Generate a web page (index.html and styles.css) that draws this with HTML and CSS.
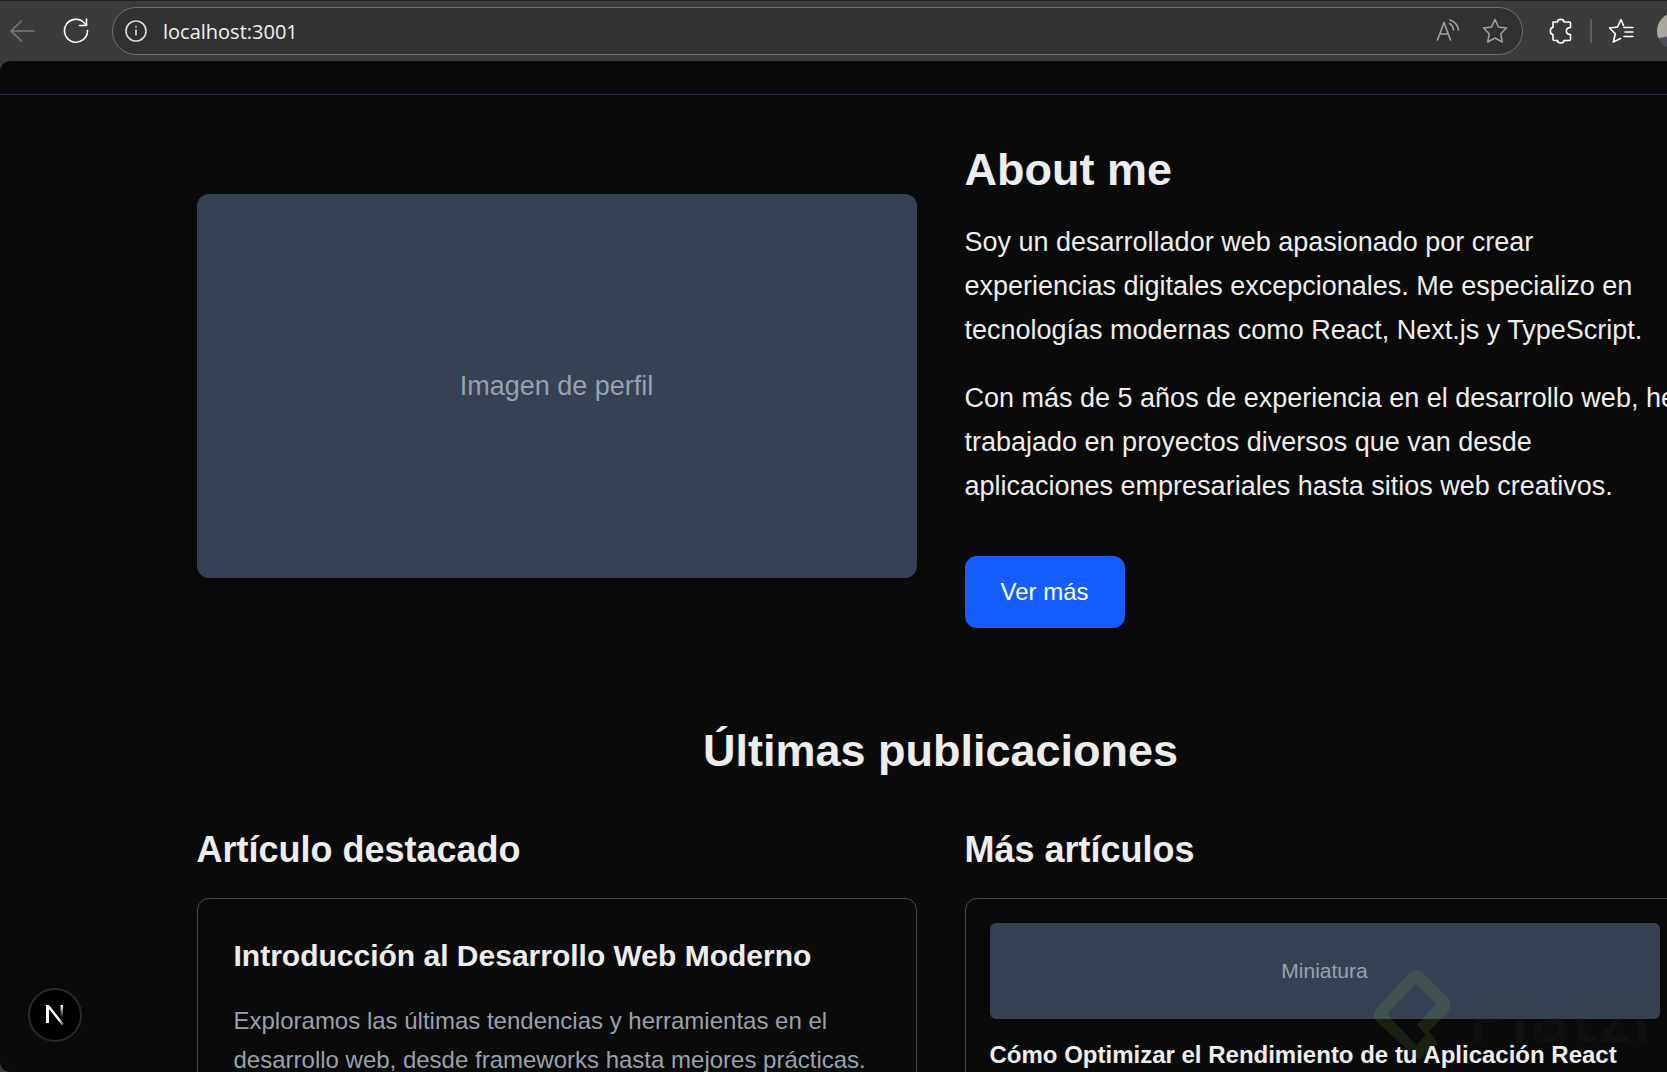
FILE: index.html
```html
<!DOCTYPE html>
<html lang="es">
<head>
    <meta charset="UTF-8">
    <meta name="viewport" content="width=device-width, initial-scale=1.0">
    <title>localhost:3001</title>
    <link rel="stylesheet" href="styles.css">
</head>
<body>
    <div class="toolbar">
        <button class="tool back" aria-label="Atrás">
            <svg width="26" height="24" viewBox="0 0 26 24"><path d="M25 12H2M12.500 2L2 12L12.500 22"/></svg>
        </button>
        <button class="tool reload" aria-label="Actualizar">
            <svg width="26" height="26" viewBox="0 0 26 26"><path d="M21 4.500A11.500 11.500 0 1 0 24.500 12.500M23.500 1V7.500H16.500M23 7L20.500 4.200"/></svg>
        </button>
        <form class="address">
            <svg class="info" width="22" height="22" viewBox="0 0 22 22"><circle cx="11" cy="11" r="10"/><path d="M11 10V15M11 6.500V7"/></svg>
            <input type="text" class="url" value="localhost:3001" aria-label="Dirección">
            <button type="button" class="tool dim" aria-label="Leer en voz alta">
                <svg width="24" height="24" viewBox="0 0 24 24"><path d="M1.500 21L8 3.500L14.500 21M4 15H12M13.500 4.500Q17 6.500 17.500 11M14 1Q21.500 3.500 22.500 11"/></svg>
            </button>
            <button type="button" class="tool dim" aria-label="Agregar a favoritos">
                <svg width="26" height="26" viewBox="0 0 26 26"><path d="M13 1.500L16.500 9L24.500 10L18.700 15.700L20.200 24L13 20L5.800 24L7.300 15.700L1.500 10L9.500 9Z"/></svg>
            </button>
        </form>
        <button class="tool" aria-label="Extensiones">
            <svg width="24" height="26" viewBox="0 0 24 26"><path d="M4 4H8.500C8.500 .5 15 .5 15 4H20.500Q21.500 4 21.500 5V9.500C16 9.500 16 16.500 21.500 16.500V21.500Q21.500 22.500 20.500 22.500H15C15 25.800 8.500 25.800 8.500 22.500H5Q4 22.500 4 21.500V16.500C.5 16.500 .5 9.500 4 9.500Z"/></svg>
        </button>
        <span class="divider"></span>
        <button class="tool" aria-label="Favoritos">
            <svg width="26" height="26" viewBox="0 0 26 26"><path d="M15.500 7.500L13 1.500L9.500 9L1.500 10L7.300 15.700L5.300 24L12.500 20.500M16 9.500H25M17 14H25M16 18.500H25"/></svg>
        </button>
        <span class="avatar"></span>
    </div>
    <div class="view">
        <div class="page">
            <header class="header"></header>
            <main class="container">
                <section class="about">
                    <div class="profile">Imagen de perfil</div>
                    <div class="bio">
                        <h2>About me</h2>
                        <p>Soy un desarrollador web apasionado por crear experiencias digitales excepcionales. Me especializo en tecnologías modernas como React, Next.js y TypeScript.</p>
                        <p>Con más de 5 años de experiencia en el desarrollo web, he trabajado en proyectos diversos que van desde aplicaciones empresariales hasta sitios web creativos.</p>
                        <button class="btn">Ver más</button>
                    </div>
                </section>
                <section class="posts">
                    <h2>Últimas publicaciones</h2>
                    <div class="cols">
                        <div class="col">
                            <h3>Artículo destacado</h3>
                            <article class="card featured">
                                <h4>Introducción al Desarrollo Web Moderno</h4>
                                <p>Exploramos las últimas tendencias y herramientas en el desarrollo web, desde frameworks hasta mejores prácticas.</p>
                            </article>
                        </div>
                        <div class="col">
                            <h3>Más artículos</h3>
                            <article class="card small">
                                <div class="thumb">Miniatura</div>
                                <h4>Cómo Optimizar el Rendimiento de tu Aplicación React</h4>
                            </article>
                        </div>
                    </div>
                </section>
            </main>
        </div>
        <button class="next" aria-label="Next.js">
            <svg width="20" height="22" viewBox="0 0 20 22">
                <defs>
                    <linearGradient id="diag" x1="0" y1="0" x2="1" y2="1"><stop offset=".7" stop-color="#fff"/><stop offset="1" stop-color="#fff" stop-opacity=".2"/></linearGradient>
                    <linearGradient id="stem" x1="0" y1="0" x2="0" y2="1"><stop offset="0" stop-color="#fff"/><stop offset="1" stop-color="#fff" stop-opacity="0"/></linearGradient>
                </defs>
                <path fill="url(#diag)" d="M1 1H4L19 20L17 21.500L4 5V19H1Z"/>
                <path fill="url(#stem)" d="M15.500 1H18V14H15.500Z"/>
            </svg>
        </button>
        <div class="watermark">
            <svg width="80" height="94" viewBox="0 0 80 94"><path d="M46 92L4 54Q-2 47 4 40L36 5Q43 -2 50 5L74 29Q81 37 74 45L56 63L65 76ZM43 16L14 46L43 77L53 67L44 57L63 36Z"/></svg>
            <span>Platzi</span>
        </div>
    </div>
</body>
</html>
```

FILE: styles.css
```css
* {
    margin: 0;
    padding: 0;
    box-sizing: border-box;
}

body {
    height: 100vh;
    display: flex;
    flex-direction: column;
    overflow: hidden;
    background-color: #3b3b3b;
    color: #ededed;
    font-family: "Liberation Sans", Arial, sans-serif;
    font-size: 24px;
    line-height: 36px;
}
button {
    border: none;
    background: none;
    color: inherit;
    font: inherit;
    cursor: pointer;
}

/* barra del navegador */
.toolbar {
    flex: none;
    display: flex;
    align-items: center;
    height: 61px;
    padding-left: 9px;
    border-top: 1px solid #222;
    overflow: hidden;
}
.toolbar svg {
    display: block;
    fill: none;
    stroke: #fff;
    stroke-width: 1.6;
    stroke-linejoin: round;
    stroke-linecap: round;
}
.toolbar .tool {
    flex: none;
}
.toolbar .back {
    margin-right: 28px;
}
.toolbar .back svg {
    stroke: #7b7b7b;
}
.toolbar .reload {
    margin-right: 23px;
}
.toolbar .address {
    flex: 1;
    display: flex;
    align-items: center;
    height: 48px;
    padding: 0 14px 0 12px;
    margin-right: 26px;
    border: 1px solid #707070;
    border-radius: 24px;
    background-color: #313131;
}
.address .info {
    flex: none;
    stroke: #dcdcdc;
}
.address .url {
    flex: 1;
    min-width: 0;
    padding-left: 16px;
    border: none;
    outline: none;
    background: none;
    color: #f2f2f2;
    font-family: "Open Sans", "Noto Sans", sans-serif;
    font-size: 20px;
}
.address .dim {
    margin-left: 22px;
}
.address .dim svg {
    stroke: #a0a0a0;
}
.toolbar .divider {
    flex: none;
    width: 2px;
    height: 24px;
    margin: 0 16px 0 17px;
    background-color: #5c5c5c;
}
.toolbar .avatar {
    flex: none;
    width: 36px;
    height: 36px;
    margin-left: 23px;
    margin-right: -26px;
    border-radius: 50%;
    background: linear-gradient(170deg, #aaa79f 58%, #4b4d57 62%);
}

/* pagina */
.view {
    flex: 1;
    position: relative;
    min-height: 0;
    overflow: hidden;
    border-radius: 10px 0 0 10px;
    background-color: #0a0a0a;
}
.page {
    width: calc(100% + 214px);
}
.header {
    height: 34px;
    border-bottom: 1px solid #1e2939;
}
.container {
    max-width: 1536px;
    margin: 0 auto;
    padding: 0 24px;
}
h2 {
    font-size: 45px;
    line-height: 53px;
}
h3 {
    margin-bottom: 24px;
    font-size: 36px;
    line-height: 48px;
}

.about {
    display: grid;
    grid-template-columns: 1fr 1fr;
    gap: 48px;
    align-items: center;
    padding: 48px 0;
}
.profile {
    display: flex;
    align-items: center;
    justify-content: center;
    height: 384px;
    border-radius: 12px;
    background-color: #364153;
    color: #99a1af;
    font-size: 27px;
}
.bio p {
    margin-top: 24px;
    font-size: 27px;
    line-height: 44px;
}
.bio .btn {
    display: block;
    margin-top: 48px;
    padding: 18px 36px;
    border-radius: 12px;
    background-color: #155dfc;
    color: #fff;
}

.posts {
    padding: 48px 0;
}
.posts h2 {
    margin-bottom: 48px;
    line-height: 54px;
    text-align: center;
}
.cols {
    display: grid;
    grid-template-columns: 1fr 1fr;
    gap: 48px;
}
.card {
    border: 1px solid #45484d;
    border-radius: 12px;
}
.featured {
    padding: 36px;
}
.featured h4 {
    margin-bottom: 24px;
    font-size: 30px;
    line-height: 42px;
}
.featured p {
    color: #99a1af;
    line-height: 39px;
}
.small {
    padding: 24px;
}
.small h4 {
    font-size: 24px;
}
.thumb {
    display: flex;
    align-items: center;
    justify-content: center;
    height: 96px;
    margin-bottom: 18px;
    border-radius: 6px;
    background-color: #364153;
    color: #99a1af;
    font-size: 21px;
}

/* indicador de desarrollo */
.next {
    position: absolute;
    left: 28px;
    bottom: 30px;
    display: flex;
    align-items: center;
    justify-content: center;
    width: 54px;
    height: 54px;
    border: 2px solid #2a2a2a;
    border-radius: 50%;
    background-color: #000;
}

.watermark {
    position: absolute;
    right: 16px;
    bottom: 10px;
    display: flex;
    align-items: center;
    gap: 14px;
    pointer-events: none;
}
.watermark svg {
    fill: #98ca3f;
    fill-opacity: .12;
}
.watermark span {
    color: rgba(60, 60, 60, .12);
    font-family: "Open Sans", sans-serif;
    font-size: 70px;
    font-weight: 600;
}
```
